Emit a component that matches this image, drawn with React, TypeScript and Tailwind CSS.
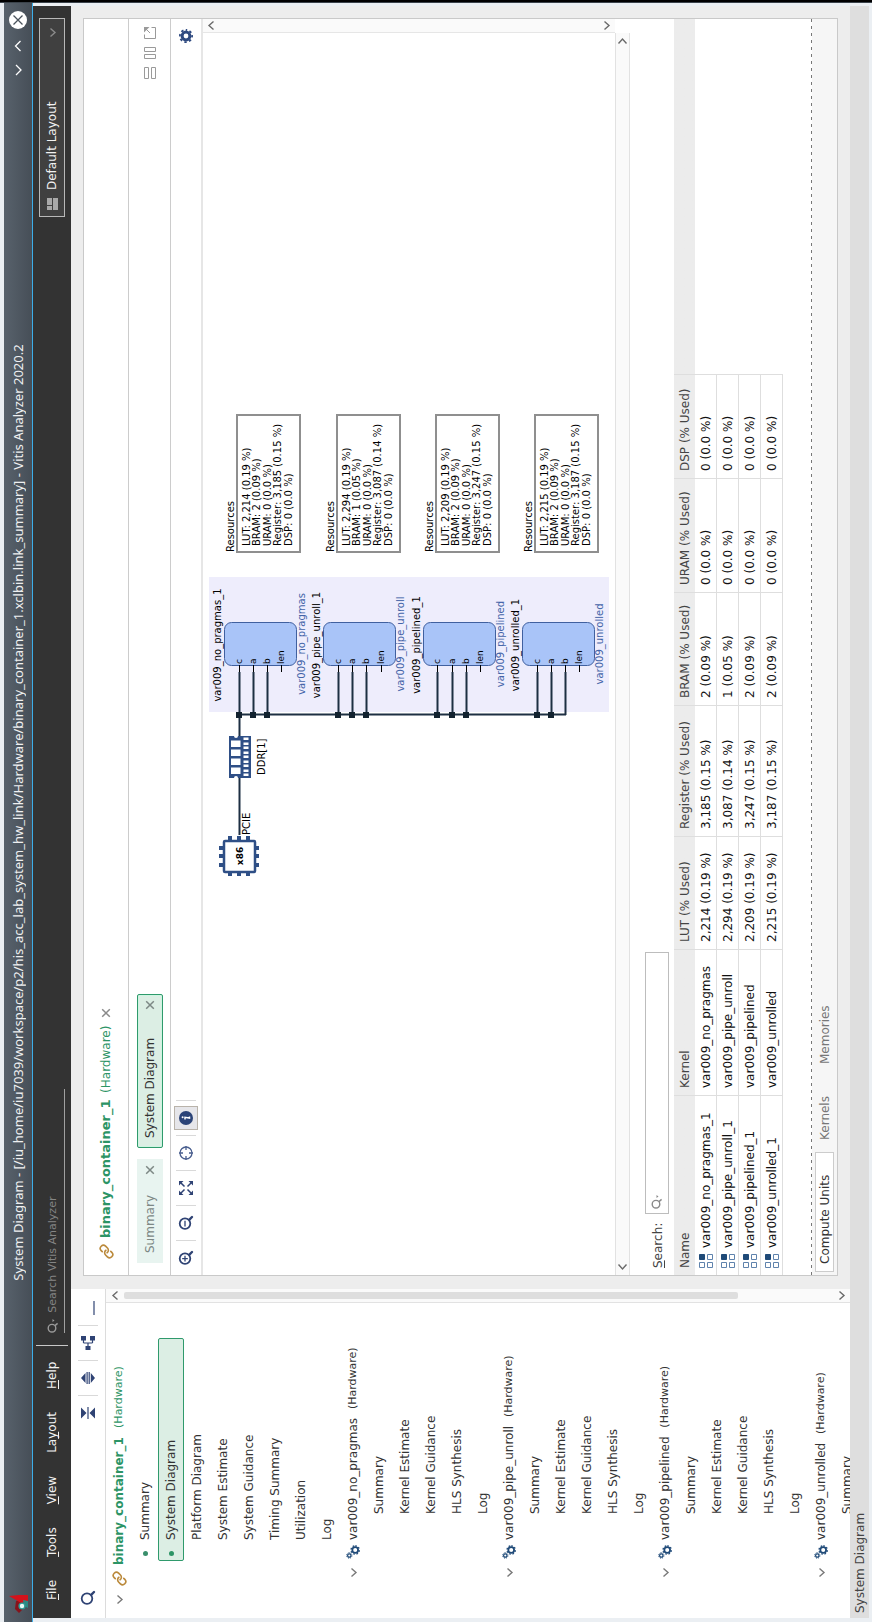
import type { ReactNode } from "react";

type Resource = {
  kernel: string;
  lut: string;
  register: string;
  bram: string;
  uram: string;
  dsp: string;
  kernelY: number;
  boxY: number;
  ports: number[];
};

const resources: Resource[] = [
  { kernel: "var009_no_pragmas", lut: "2,214 (0.19 %)", register: "3,185 (0.15 %)", bram: "2 (0.09 %)", uram: "0 (0.0 %)", dsp: "0 (0.0 %)", kernelY: 224, boxY: 236, ports: [239, 253, 267, 281] },
  { kernel: "var009_pipe_unroll", lut: "2,294 (0.19 %)", register: "3,087 (0.14 %)", bram: "1 (0.05 %)", uram: "0 (0.0 %)", dsp: "0 (0.0 %)", kernelY: 323, boxY: 336, ports: [338, 352, 366, 381] },
  { kernel: "var009_pipelined", lut: "2,209 (0.19 %)", register: "3,247 (0.15 %)", bram: "2 (0.09 %)", uram: "0 (0.0 %)", dsp: "0 (0.0 %)", kernelY: 423, boxY: 435, ports: [437, 452, 466, 480] },
  { kernel: "var009_unrolled", lut: "2,215 (0.19 %)", register: "3,187 (0.15 %)", bram: "2 (0.09 %)", uram: "0 (0.0 %)", dsp: "0 (0.0 %)", kernelY: 522, boxY: 534, ports: [537, 551, 565, 579] },
];

const reports = ["Platform Diagram", "System Estimate", "System Guidance", "Timing Summary", "Utilization", "Log"];
const kernelReports = ["Summary", "Kernel Estimate", "Kernel Guidance", "HLS Synthesis", "Log"];
const menus = ["File", "Tools", "View", "Layout", "Help"];
const menuKeys = [0, 0, 0, 2, 0];

/* ---------- icons ---------- */

function Chevron({ dir, className = "" }: { dir: "up" | "down" | "left" | "right"; className?: string }) {
  const d = {
    up: "M1.5 7.5 5.5 3l4 4.5",
    down: "M1.5 3.5 5.5 8l4-4.5",
    left: "M7.5 1.5 3 5.5l4.5 4",
    right: "M3.5 1.5 8 5.5l-4.5 4",
  }[dir];
  return (
    <svg viewBox="0 0 11 11" className={`size-[11px] shrink-0 ${className}`} fill="none" stroke="currentColor" strokeWidth="1.4">
      <path d={d} />
    </svg>
  );
}

function Cross({ className = "" }: { className?: string }) {
  return (
    <svg viewBox="0 0 10 10" className={`size-[10px] shrink-0 ${className}`} fill="none" stroke="currentColor" strokeWidth="1.5">
      <path d="M1.2 1.2 8.8 8.8M8.8 1.2 1.2 8.8" />
    </svg>
  );
}

function LinkIcon() {
  return (
    <svg viewBox="0 0 24 24" className="size-[15px] shrink-0" fill="none" stroke="#bb8a3c" strokeWidth="2.6" strokeLinecap="round" strokeLinejoin="round">
      <path d="M10 13a5 5 0 0 0 7.54.54l3-3a5 5 0 0 0-7.07-7.07l-1.72 1.71" />
      <path d="M14 11a5 5 0 0 0-7.54-.54l-3 3a5 5 0 0 0 7.07 7.07l1.71-1.71" />
    </svg>
  );
}

function Magnifier({ sign = "" }: { sign?: "" | "+" | "-" }) {
  return (
    <svg viewBox="0 0 16 16" className="size-4 shrink-0 text-[#2f4374]" fill="none" stroke="currentColor" strokeWidth="1.8">
      <circle cx="7.4" cy="7" r="5.3" />
      <path d="M11.4 11.4 14 14" strokeWidth="2.4" strokeLinecap="round" />
      {sign !== "" && <path d="M4.6 7h5.6" strokeWidth="1.3" />}
      {sign === "+" && <path d="M7.4 4.2v5.6" strokeWidth="1.3" />}
    </svg>
  );
}

function SearchDrop({ className }: { className: string }) {
  return (
    <svg viewBox="0 0 14 12" className={`h-3 w-[14px] shrink-0 ${className}`} fill="none" stroke="currentColor" strokeWidth="1.4">
      <circle cx="4.8" cy="5" r="3.8" />
      <path d="M7.4 8 9.6 10.6" />
      <path d="M11 5.5h3l-1.5 2z" fill="currentColor" stroke="none" />
    </svg>
  );
}

function Gears() {
  return (
    <svg viewBox="0 0 14 14" className="size-[14px] shrink-0" fill="none" stroke="#1f4a78">
      <circle cx="9" cy="9.2" r="2.9" strokeWidth="1.8" />
      <circle cx="9" cy="9.2" r="4.2" strokeWidth="1.3" strokeDasharray="1.65 1.65" />
      <circle cx="3.5" cy="3.3" r="1.7" strokeWidth="1.2" />
      <circle cx="3.5" cy="3.3" r="2.7" strokeWidth="1" strokeDasharray="1.06 1.06" />
    </svg>
  );
}

function UnitIcon() {
  return (
    <svg viewBox="0 0 14 14" className="size-[14px] shrink-0" fill="white" stroke="#5f83ad">
      <path d="M.5.5h5v5h-5zM.5 8.5h5v5h-5zM8.5 8.5h5v5h-5z" />
      <path d="M8.5.5h5v5h-5z" fill="#1f4a78" stroke="#1f4a78" />
    </svg>
  );
}

/* ---------- shared pieces ---------- */

function Divider() {
  return <span className="h-5 w-px shrink-0 bg-[#d9d9d9]" />;
}

function ToolButton({ label, active = false, children }: { label: string; active?: boolean; children: ReactNode }) {
  return (
    <button
      aria-label={label}
      className={`flex size-6 shrink-0 items-center justify-center ${active ? "border border-[#b9b3aa] bg-[#e6e6ea]" : ""}`}
    >
      {children}
    </button>
  );
}

function MenuLabel({ text, at }: { text: string; at: number }) {
  return (
    <>
      {text.slice(0, at)}
      <span className="underline underline-offset-2">{text[at]}</span>
      {text.slice(at + 1)}
    </>
  );
}

/* ---------- window chrome ---------- */

function TitleBar() {
  return (
    <header className="flex h-[29px] shrink-0 items-center border-b border-[#3daee9] bg-linear-to-b from-[#58626c] to-[#464e57] text-[13px] text-[#eff0f1]">
      <div className="w-24 pl-2">
        <svg viewBox="0 0 20 20" className="size-5">
          <path d="M1 11 5 7 13 8 14 13 7 17z" fill="#86131b" />
          <path d="M18 1 19 11 19 20 13 20 11 13 14 8z" fill="#d4121b" />
          <path d="M6 20 8 16 14 15 13 20z" fill="#2a8a84" />
          <circle cx="8" cy="14" r="3.6" fill="#2f9a94" />
          <circle cx="8" cy="14" r="2.2" fill="#e6faf7" />
        </svg>
      </div>
      <h1 className="flex-1 truncate text-center font-['Noto_Sans']">
        System Diagram - [/iu_home/iu7039/workspace/p2/his_acc_lab_system_hw_link/Hardware/binary_container_1.xclbin.link_summary] - Vitis Analyzer 2020.2
      </h1>
      <div className="flex w-24 items-center justify-end gap-[10px] pr-2">
        <button aria-label="Minimize">
          <svg viewBox="0 0 14 14" className="size-[14px]" fill="none" stroke="white" strokeWidth="1.3">
            <path d="M2 5l5 5 5-5" />
          </svg>
        </button>
        <button aria-label="Maximize">
          <svg viewBox="0 0 14 14" className="size-[14px]" fill="none" stroke="white" strokeWidth="1.3">
            <path d="M2 9.5l5-5 5 5" />
          </svg>
        </button>
        <button aria-label="Close">
          <svg viewBox="0 0 18 18" className="size-[18px]">
            <circle cx="9" cy="9" r="9" fill="white" />
            <path d="M4.5 4.5l9 9M13.5 4.5l-9 9" stroke="#4a535c" strokeWidth="1.3" />
          </svg>
        </button>
      </div>
    </header>
  );
}

function MenuBar() {
  return (
    <div className="ml-1 mr-[3px] flex h-[38px] shrink-0 items-center bg-[#333333] text-[#f2f2f2]">
      <nav className="flex gap-[23px] pl-[18px]">
        {menus.map((m, i) => (
          <button key={m}>
            <MenuLabel text={m} at={menuKeys[i]} />
          </button>
        ))}
      </nav>
      <span className="ml-4 h-8 w-px bg-[#c8c8c8]" />
      <label className="ml-3 mt-1 flex h-7 w-[244px] items-center gap-[6px] self-start border-b border-[#a0a0a0] pt-1">
        <SearchDrop className="text-[#9a9a9a]" />
        <input
          aria-label="Search Vitis Analyzer"
          placeholder="Search Vitis Analyzer"
          className="min-w-0 flex-1 bg-transparent text-[11px] outline-none placeholder:text-[#858585]"
        />
      </label>
      <button className="ml-auto mr-3 flex h-[26px] w-[199px] items-center border border-[#b8b8b8] bg-[#404040] pl-[6px] pr-2">
        <svg viewBox="0 0 12 11" className="h-[11px] w-3 fill-[#a9a9a9]">
          <path d="M0 0h4v5H0zM5 0h7v5H5zM0 6h12v5H0z" />
        </svg>
        <span className="ml-2">Default Layout</span>
        <Chevron dir="down" className="ml-auto text-[#8a8a8a]" />
      </button>
    </div>
  );
}

/* ---------- sidebar ---------- */

function LeafRow({ text, indent }: { text: string; indent: string }) {
  return (
    <li className={`flex h-[26px] shrink-0 items-center ${indent}`}>
      <a href="#">{text}</a>
    </li>
  );
}

function Sidebar() {
  return (
    <aside className="flex w-[329px] shrink-0 flex-col bg-white">
      <div className="flex h-[35px] shrink-0 items-center gap-[5px] border-b border-[#dcdcdc] pl-2 pr-[7px]">
        <ToolButton label="Search">
          <Magnifier />
        </ToolButton>
        <span className="flex-1" />
        <ToolButton label="Collapse all">
          <svg viewBox="0 0 14 14" className="size-[14px] fill-[#2f4374]">
            <path d="M1.5 0h11L7 5.500zM1 6.400h12v1.200H1zM7 8.500l5.500 5.500h-11z" />
          </svg>
        </ToolButton>
        <Divider />
        <ToolButton label="Expand all">
          <svg viewBox="0 0 14 14" className="size-[14px] fill-[#2f4374]">
            <path d="M7 0l5 4.500H2zM1 5.500h12v1.200H1zM1 7.600h12v1.200H1zM2 9.800h10L7 14z" />
          </svg>
        </ToolButton>
        <Divider />
        <ToolButton label="Hierarchy">
          <svg viewBox="0 0 14 14" className="size-[14px] fill-[#2f4374]">
            <path d="M0 4.500h4v5H0zM9.500 0h4.500v5H9.500zM9.500 9h4.500v5H9.500z" />
            <path d="M4 7h3M7 2.500v9M7 2.500h3M7 11.500h3" fill="none" stroke="#2f4374" strokeWidth="1.2" />
          </svg>
        </ToolButton>
        <Divider />
        <ToolButton label="Minimize panel">
          <svg viewBox="0 0 14 14" className="size-[14px]">
            <path d="M0 13h14" stroke="#2f4374" strokeWidth="1.2" />
          </svg>
        </ToolButton>
      </div>
      <div className="flex min-h-0 flex-1">
        <ul className="flex min-w-0 flex-1 flex-col overflow-hidden text-[#333333]">
          <li className="flex h-[26px] shrink-0 items-center whitespace-pre pl-[13px] text-[#2c9465]">
            <Chevron dir="down" className="mr-2 text-[#7a7a7a]" />
            <LinkIcon />
            <b className="ml-[6px] font-bold">binary_container_1 </b>
            <span className="ml-[5px] text-[11px]">(Hardware)</span>
          </li>
          <li className="flex h-[26px] shrink-0 items-center pl-[62px]">
            <span className="mr-[11px] size-[5px] rounded-full bg-[#3a8f6c]" />
            <a href="#">Summary</a>
          </li>
          <li className="ml-[57px] flex h-[26px] w-[223px] shrink-0 items-center rounded-xs border border-[#2f9a6c] bg-[#dceee4] pl-1">
            <span className="mr-[11px] size-[5px] rounded-full bg-[#2c9465]" />
            <a href="#">System Diagram</a>
          </li>
          {reports.map((r) => (
            <LeafRow key={r} text={r} indent="pl-[78px]" />
          ))}
          {resources.map((k, i) => [
            <li key={k.kernel} className="flex h-[26px] shrink-0 items-center whitespace-pre pl-10">
              <Chevron dir="down" className="mr-2 text-[#7a7a7a]" />
              <Gears />
              <span className="ml-[5px]">{k.kernel} </span>
              <span className="ml-[5px] text-[11px]">(Hardware)</span>
            </li>,
            ...kernelReports
              .slice(0, i === resources.length - 1 ? 1 : undefined)
              .map((r) => <LeafRow key={k.kernel + r} text={r} indent="pl-[104px]" />),
          ])}
        </ul>
        <div className="flex w-[14px] shrink-0 flex-col items-center justify-between border-l border-[#e2e2e2] bg-[#fafafa] pb-[3px] pt-1 text-[#6a6a6a]">
          <Chevron dir="up" />
          <span className="mb-[98px] mt-[3px] w-[7px] flex-1 rounded-xs bg-[#dedede]" />
          <Chevron dir="down" />
        </div>
      </div>
    </aside>
  );
}

/* ---------- diagram ---------- */

function Diagram() {
  const line = { stroke: "#1d2f42", strokeWidth: 2 };
  return (
    <svg
      viewBox="348 203 1240 412"
      className="h-[412px] w-[1240px] shrink-0 font-['DejaVu_Sans'] text-[10px]"
      role="img"
      aria-label="System diagram"
    >
      <rect x="911" y="209" width="135" height="400" fill="#eeedfc" />

      {/* host */}
      <g fill="#2f4f86">
        {[756, 765, 773].map((x) => (
          <rect key={x} x={x} y="219" width="4" height="40" />
        ))}
        {[228, 237, 246].map((y) => (
          <rect key={y} x="747" y={y} width="40" height="4" />
        ))}
        <rect x="751" y="224" width="31" height="31" rx="1" fill="white" stroke="#2f4f86" strokeWidth="2.5" />
      </g>
      <text x="767" y="243" fontSize="9" fontWeight="bold" textAnchor="middle">x86</text>
      <path d="M788 239.500h57" {...line} />
      <text x="788" y="250">PCIE</text>

      {/* memory */}
      <rect x="845" y="229" width="42" height="22" fill="#2f4f86" />
      <g fill="white">
        {[849, 858, 867, 876].map((x) => (
          <rect key={x} x={x} y="231" width="6.5" height="9.5" />
        ))}
        {[847, 851, 856, 860, 865, 869, 874, 878, 883].map((x) => (
          <rect key={x} x={x} y="243.5" width="2.5" height="5" />
        ))}
        <path d="M845 234a2 2 0 0 1 0 4zM887 234a2 2 0 0 0 0 4z" />
      </g>
      <text x="848" y="265">DDR[1]</text>
      <path d="M887 239.500h21" {...line} />
      <path d="M908.500 239v327" {...line} />

      {resources.map((r, i) => (
        <g key={r.kernel}>
          <rect x="957.5" y={r.kernelY + 0.5} width="43" height="72" rx="7" fill="#a9c4f8" stroke="#40609f" />
          <text x="978" y={r.kernelY - 3} textAnchor="middle">{r.kernel}_1</text>
          <text x="979" y={r.kernelY + 81} textAnchor="middle" fill="#4464a8">{r.kernel}</text>
          {["c", "a", "b", "len"].map((p, j) => (
            <g key={p}>
              {j < 3 && <path d={`M908 ${r.ports[j] + 0.5}H951`} {...line} />}
              {j < 3 && !(i === 3 && j === 2) && <rect x="905" y={r.ports[j] - 3} width="6" height="6" fill="#12222f" />}
              <path d={`M951 ${r.ports[j] + 0.5}h7`} stroke="#000" />
              <text x="959" y={r.ports[j] + 3} fontSize="9">{p}</text>
            </g>
          ))}
          <text x="1071" y={r.boxY - 2}>Resources</text>
          <rect x="1071" y={r.boxY + 1} width="137" height="63" fill="white" stroke="#8f8f8f" strokeWidth="2" />
          <text x="1077" y={r.boxY + 14}>LUT: {r.lut}</text>
          <text x="1077" y={r.boxY + 24}>BRAM: {r.bram}</text>
          <text x="1077" y={r.boxY + 35}>URAM: {r.uram}</text>
          <text x="1077" y={r.boxY + 45}>Register: {r.register}</text>
          <text x="1077" y={r.boxY + 56}>DSP: {r.dsp}</text>
        </g>
      ))}
    </svg>
  );
}

/* ---------- resource table ---------- */

const columns = [
  { title: "Name", width: "w-[180px]" },
  { title: "Kernel", width: "w-[146px]" },
  { title: "LUT (% Used)", width: "w-[113px]" },
  { title: "Register (% Used)", width: "w-[131px]" },
  { title: "BRAM (% Used)", width: "w-[113px]" },
  { title: "URAM (% Used)", width: "w-[114px]" },
  { title: "DSP (% Used)", width: "w-[104px]" },
];

function UnitsTable() {
  return (
    <div className="shrink-0 bg-linear-to-b from-[#ececec] from-[21px] to-white to-[21px]">
      <table className="w-[901px] table-fixed border-separate border-spacing-0 text-left">
        <thead>
          <tr className="h-[21px] text-[#444444]">
            {columns.map((c) => (
              <th key={c.title} className={`${c.width} whitespace-nowrap border-r border-[#dedede] p-0 pl-[7px] font-normal leading-5`}>
                {c.title}
              </th>
            ))}
          </tr>
        </thead>
        <tbody className="text-[#111111]">
          {resources.map((r) => (
            <tr key={r.kernel} className="h-[22px]">
              {[r.kernel + "_1", r.kernel, r.lut, r.register, r.bram, r.uram, r.dsp].map((v, i) => (
                <td key={i} className="whitespace-nowrap border-b border-r border-[#dedede] p-0 pl-[7px] leading-5">
                  {i === 0 ? (
                    <span className="flex items-center gap-[6px]">
                      <UnitIcon />
                      {v}
                    </span>
                  ) : (
                    v
                  )}
                </td>
              ))}
            </tr>
          ))}
        </tbody>
      </table>
    </div>
  );
}

/* ---------- editor ---------- */

function Editor() {
  return (
    <main className="mb-3 ml-[13px] mr-3 mt-3 flex min-w-0 flex-1 flex-col border border-[#c9c9c9] bg-white">
      <div className="flex h-[45px] shrink-0 items-center whitespace-pre border-b border-[#cccccc] pl-4 text-[#2c9465]">
        <LinkIcon />
        <b className="ml-[6px] text-[13px] font-bold">binary_container_1 </b>
        <span className="ml-[2px]">(Hardware)</span>
        <button aria-label="Close report" className="ml-2 text-[#8a8a8a]">
          <Cross />
        </button>
      </div>
      <div className="flex h-[42px] shrink-0 items-center gap-[11px] border-b border-[#cccccc] pl-3 pr-2">
        <div className="flex h-[26px] w-[104px] items-center justify-between bg-[#e8f4f0] pl-[10px] pr-[6px] text-[#7d8885]">
          <button>Summary</button>
          <button aria-label="Close Summary">
            <Cross />
          </button>
        </div>
        <div className="flex h-[26px] w-[154px] items-center justify-between rounded-xs border border-[#2f9a6c] bg-[#dceee4] pl-[9px] pr-[5px] text-[#333333] shadow-[inset_0_0_0_1px_#cdf5e1]">
          <button>System Diagram</button>
          <button aria-label="Close System Diagram" className="text-[#7d8885]">
            <Cross />
          </button>
        </div>
        <div className="ml-auto flex gap-2 text-[#9a9a9a]">
          <button aria-label="Split rows">
            <svg viewBox="0 0 12 12" className="size-3" fill="none" stroke="currentColor">
              <path d="M.5.5h11v4H.5zM.5 7.500h11v4H.5z" />
            </svg>
          </button>
          <button aria-label="Split columns">
            <svg viewBox="0 0 12 12" className="size-3" fill="none" stroke="currentColor">
              <path d="M.5.5h4v11h-4zM7.500.5h4v11h-4z" />
            </svg>
          </button>
          <button aria-label="Float window">
            <svg viewBox="0 0 12 12" className="size-3" fill="none" stroke="currentColor">
              <path d="M4.500.5h-4v11h11v-4M6 6l4.500-4.500" />
              <path d="M6.500 0H12v5.500z" fill="currentColor" stroke="none" />
            </svg>
          </button>
        </div>
      </div>
      <div className="flex h-8 shrink-0 items-center gap-[5px] border-b-2 border-[#e6e6e6] px-[5px]">
        <ToolButton label="Zoom in">
          <Magnifier sign="+" />
        </ToolButton>
        <Divider />
        <ToolButton label="Zoom out">
          <Magnifier sign="-" />
        </ToolButton>
        <Divider />
        <ToolButton label="Fit">
          <svg viewBox="0 0 14 14" className="size-[14px] fill-[#2f4374]" stroke="#2f4374" strokeWidth="1.5">
            <path d="M2 2l3.500 3.500M12 2 8.500 5.500M2 12l3.500-3.500M12 12 8.500 8.500" />
            <path d="M0 0h4.500L0 4.500zM14 0H9.500L14 4.500zM0 14h4.500L0 9.500zM14 14H9.500L14 9.500z" stroke="none" />
          </svg>
        </ToolButton>
        <Divider />
        <ToolButton label="Center">
          <svg viewBox="0 0 14 14" className="size-[14px]" fill="none" stroke="#4a5f8f" strokeWidth="1.3">
            <circle cx="7" cy="7" r="6" />
            <path d="M7 0v4M7 10v4M0 7h4M10 7h4" />
          </svg>
        </ToolButton>
        <Divider />
        <ToolButton label="Show resources" active>
          <svg viewBox="0 0 14 14" className="size-[14px] shrink-0">
            <circle cx="7" cy="7" r="7" fill="#2b4377" />
            <path d="M5.500 6h2.200L7 10.500h1.500" fill="none" stroke="white" strokeWidth="1.5" />
            <circle cx="7.7" cy="3.6" r="1" fill="white" />
          </svg>
        </ToolButton>
        <Divider />
        <span className="flex-1" />
        <ToolButton label="Settings">
          <svg viewBox="0 0 14 14" className="size-[14px]" fill="none" stroke="#2f4a80">
            <circle cx="7" cy="7" r="3.9" strokeWidth="3" />
            <circle cx="7" cy="7" r="6.1" strokeWidth="1.8" strokeDasharray="2.4 2.391" strokeDashoffset="1.2" />
          </svg>
        </ToolButton>
      </div>

      <div className="flex shrink-0">
        <div className="min-w-0 flex-1 overflow-hidden">
          <Diagram />
        </div>
        <div className="flex w-[14px] shrink-0 flex-col items-center justify-between border-l border-[#e6e6e6] bg-[#fafafa] py-[3px] text-[#6a6a6a]">
          <Chevron dir="up" />
          <Chevron dir="down" />
        </div>
      </div>
      <div className="mr-[14px] flex h-[15px] shrink-0 items-center justify-between border-y border-[#e2e2e2] bg-[#fafafa] px-[3px] text-[#6a6a6a]">
        <Chevron dir="left" />
        <Chevron dir="right" />
      </div>

      <div className="flex h-[44px] shrink-0 items-center pb-[3px] pl-[7px] pt-3">
        <label htmlFor="unit-search" className="w-[54px] pt-[2px] text-[#444444]">
          <MenuLabel text="Search:" at={0} />
        </label>
        <div className="flex h-6 w-[262px] items-center border border-[#bdbdbd] bg-white pl-1">
          <SearchDrop className="text-[#8a8a8a]" />
          <input id="unit-search" className="min-w-0 flex-1 bg-transparent pl-1 outline-none" />
        </div>
      </div>

      <UnitsTable />

      <div className="min-h-0 flex-1" />
      <svg className="h-px w-full shrink-0">
        <path d="M0 .5H4000" stroke="#777777" strokeDasharray="3 4" />
      </svg>
      <div className="flex h-[25px] shrink-0 items-center bg-[#f6f6f6] pl-[3px] text-[#777777]">
        <button className="flex h-[19px] w-[120px] items-center border border-[#cccccc] bg-white pl-[7px] text-[#333333]">Compute Units</button>
        <button className="ml-3">Kernels</button>
        <button className="ml-8">Memories</button>
      </div>
    </main>
  );
}

export default function App() {
  return (
    <div className="h-screen w-screen overflow-hidden bg-[#ebeff3]">
      <div className="flex h-[100vw] w-[100vh] origin-top-left translate-y-[100vh] -rotate-90 bg-[#ebeff3] font-['DejaVu_Sans',sans-serif] text-[12px] leading-4">
        <div className="flex min-w-0 flex-1 flex-col border-r border-[#3b434b]">
          <div className="h-1 shrink-0" />
          <TitleBar />
          <MenuBar />
          <div className="ml-1 mr-[3px] flex min-h-0 flex-1 bg-[#ededed]">
            <Sidebar />
            <Editor />
          </div>
          <footer className="mb-[3px] ml-1 mr-[3px] flex h-[19px] shrink-0 items-center bg-[#dedede] pl-[5px] pt-px text-[#444444]">
            System Diagram
          </footer>
        </div>
        <div className="w-[2px] shrink-0 bg-black" />
      </div>
    </div>
  );
}
